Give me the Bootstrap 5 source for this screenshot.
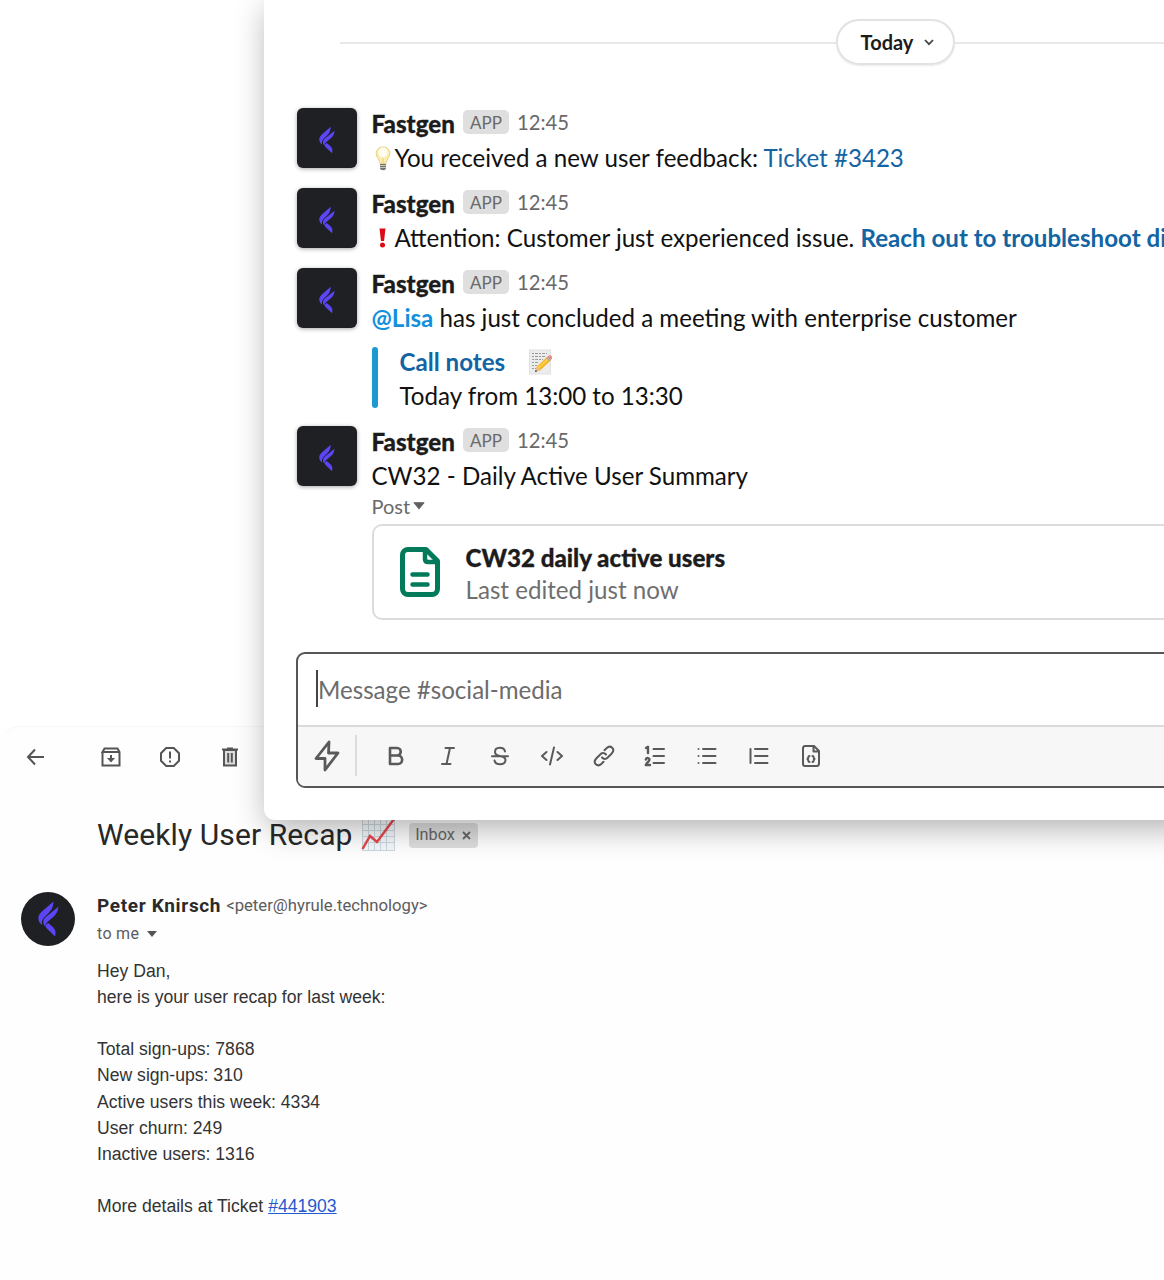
<!DOCTYPE html>
<html lang="en">
<head>
    <meta charset="UTF-8">
    <meta name="viewport" content="width=device-width, initial-scale=1.0">
    <title>Fastgen Notifications</title>
    <link href="https://cdn.jsdelivr.net/npm/bootstrap@5.3.2/dist/css/bootstrap.min.css" rel="stylesheet">
    <style>
        body { width: 1164px; height: 1280px; background: #fff; }
        svg { display: block; flex: none; }

        /* Chat window, lies over the mail window */
        .chat-window { left: 264px; top: 0; width: 1262px; height: 820px; padding: 0 32px; background: #fff; border-radius: 0 0 0 11px; box-shadow: 3px 8px 32px rgba(0, 0, 0, .31); font-family: Lato, sans-serif; color: #1d1c1d; font-size: 24.13px; line-height: 34px; }
        .day-row { padding-top: 19px; margin: 0 44px; }
        .day-line { height: 2px; margin-top: 1px; background: #e8e8e8; }
        .day-pill { width: 119px; height: 46px; border: 2px solid #e2e2e2; border-radius: 23px; font-size: 20px; font-weight: 700; box-shadow: 0 1px 2px rgba(0, 0, 0, .08); gap: 11px; padding-left: 5px; }
        .messages { padding-top: 42px; }
        .message { gap: 14.5px; padding-left: 1px; margin-bottom: 12px; white-space: nowrap; }
        .app-avatar { width: 60px; height: 60px; margin-top: 1px; padding-top: 4px; border-radius: 6px; background: #1f2024; box-shadow: 0 1px 4px rgba(0, 0, 0, .35); }
        .message-body { color: #111; }
        .app-name { font-weight: 900; color: #1d1c1d; -webkit-text-stroke: .3px #1d1c1d; }
        .app-tag { width: 46px; height: 24px; line-height: 25px; margin: 3px 8px 0 8px; border-radius: 5px; background: #dfdfdf; color: #696969; font-size: 17px; text-align: center; }
        .app-time { font-size: 20.3px; line-height: 31px; color: #696969; }
        .chat-link { color: #1264a3; text-decoration: none; }
        .mention { color: #1390dd; font-weight: 700; }
        .quote-bar { width: 6px; height: 61px; margin-top: 2px; border-radius: 3px; background: #1d9bd1; }
        .quote-block { gap: 22px; margin-top: 10px; }
        .post-label { font-size: 20px; line-height: 26px; padding-bottom: 2px; color: #696969; gap: 3px; }
        .post-card { width: 1100px; height: 96px; margin-top: 3px; border: 2px solid #dcdcdc; border-radius: 10px; padding-left: 26px; gap: 26px; line-height: 32px; }
        .post-text { padding-top: 3px; }
        .post-meta { color: #6f6f6f; }
        .composer { height: 136px; margin-top: 32px; border: 2px solid #565656; border-radius: 9px; overflow: hidden; }
        .composer-input { height: 71px; padding-left: 18px; font-size: 24.1px; color: #6c6c6c; }
        .caret { width: 2px; height: 37px; background: #444; margin-top: -2px; }
        .composer-tools { height: 61px; padding-bottom: 2px; background: #f7f7f7; border-top: 2px solid #dadada; padding-left: 16px; color: #5a5a5a; }
        .tool-divider { width: 2px; height: 41px; background: #dcdcdc; margin: 0 13px 0 15px; }
        .tool { width: 51.9px; }

        /* Mail window */
        .mail-window { padding-top: 726px; height: 1280px; overflow: hidden; font-family: Roboto, sans-serif; color: #2a2a2a; }
        .mail-pane { height: 554px; border-radius: 20px 0 0 0; border-top: 1px solid #f7f7f7; background: #fefefe; }
        .mail-tools { height: 60px; padding-left: 23px; gap: 35.500px; color: #555; }
        .mail-tools svg:first-child { margin-right: 16px; }
        .mail-subject { height: 48px; margin: 24px 0 0 97px; white-space: nowrap; }
        .subject-text { font-size: 30px; line-height: 48px; letter-spacing: .1px; color: #282828; }
        .inbox-tag { width: 69px; height: 25px; border-radius: 4px; background: #ddd; color: #666; font-size: 16.300px; gap: 7px; margin: 1px 0 0 13px; }
        .mail-head { margin-top: 33px; padding-left: 21px; gap: 22px; }
        .mail-avatar { width: 54px; height: 54px; background: #1f2024; }
        .sender { font-size: 19px; font-weight: 700; letter-spacing: .65px; line-height: 28px; }
        .sender-mail { font-size: 16.700px; color: #5c5c5c; margin-left: 5px; }
        .to-me { font-size: 16px; line-height: 27px; color: #5c5c5c; gap: 8px; letter-spacing: .3px; }
        .mail-text { margin: 10.500px 0 0 97px; font-family: "Liberation Sans", Arial, sans-serif; font-size: 17.600px; line-height: 26.200px; color: #333; }
        .mail-link { color: #2259cf; }
    </style>
</head>
<body class="position-relative overflow-hidden">

<!-- Shared logo -->
<svg width="0" height="0" class="position-absolute">
    <symbol id="logo" viewBox="58 40 64 108">
        <g fill="#5b45f5">
            <path d="M105 41L76 66C64 76 58 84 59 93C60 102 64 108 70 112C69 103 70 96 78 88L92 74C102 64 104 55 105 41Z"/>
            <path d="M120 57L94 78C80 88 74 94 74 103C74 109 76 113 80 117C80 112 82 106 90 100L106 86C116 77 119 70 120 57Z"/>
            <path d="M89 106L104 119C112 127 113 135 110 147L84 122C80 117 80 113 84 110Z"/>
        </g>
    </symbol>
</svg>

<div class="mail-window">
    <div class="mail-pane">
        <div class="mail-tools d-flex align-items-center">
            <svg width="24" height="24" viewBox="0 0 24 24" fill="none" stroke="currentColor" stroke-width="2"><path d="M21 12H6M12 4.500L5 12L12 19.500"/></svg>
            <svg width="24" height="24" viewBox="0 0 24 24" fill="none" stroke="currentColor" stroke-width="2"><path d="M3.500 7V20.500H20.500V7L18.500 3.500H5.500L3.500 7H20.500M12 10V16"/><path d="M8 13H16L12 17.500Z" fill="currentColor" stroke="none"/></svg>
            <svg width="24" height="24" viewBox="0 0 24 24" fill="none" stroke="currentColor" stroke-width="2"><path d="M8.200 3H15.800L21 8.200V15.800L15.800 21H8.200L3 15.800V8.200ZM12 6.500V13.500M12 15.500V17.500"/></svg>
            <svg width="24" height="24" viewBox="0 0 24 24" fill="none" stroke="currentColor" stroke-width="2"><path d="M6 5H18V20.500H6Z" fill="#ddd"/><path d="M4 4.500H20M9 3.500H15M10.200 8V17.500M13.800 8V17.500"/></svg>
        </div>
        <div class="mail-subject d-flex align-items-center">
            <span class="subject-text">Weekly User Recap</span>
            <svg class="ms-2" width="35" height="34" viewBox="0 0 35 34">
                <rect x="1" y="0" width="33" height="33" fill="#f5f8fa"/>
                <path d="M1 .5H34M1 6.500H34M1 12.500H34M1 18.500H34M1 24.500H34M1 32.500H34M1.500 0V33M7.500 0V33M13.500 0V33M19.500 0V33M25.500 0V33M33.500 0V33" stroke="#cbd8df" fill="none"/>
                <path d="M1.500 31L9 18L16 24L33 1" fill="none" stroke="#e5484d" stroke-width="2.500"/>
            </svg>
            <div class="inbox-tag d-flex align-items-center justify-content-center">Inbox
                <svg width="9" height="9" viewBox="0 0 9 9" stroke="currentColor" stroke-width="1.800"><path d="M1 1L8 8M8 1L1 8"/></svg>
            </div>
        </div>
        <div class="mail-head d-flex">
            <div class="mail-avatar rounded-circle d-flex align-items-center justify-content-center">
                <svg width="21" height="36"><use href="#logo"/></svg>
            </div>
            <div>
                <div class="d-flex align-items-center">
                    <span class="sender">Peter Knirsch</span>
                    <span class="sender-mail">&lt;peter@hyrule.technology&gt;</span>
                </div>
                <div class="to-me d-flex align-items-center">to me
                    <svg width="10" height="6" viewBox="0 0 10 6"><path d="M0 0H10L5 6Z" fill="#555"/></svg>
                </div>
            </div>
        </div>
        <div class="mail-text">
            Hey Dan,<br>
            here is your user recap for last week:<br>
            <br>
            Total sign-ups: 7868<br>
            New sign-ups: 310<br>
            Active users this week: 4334<br>
            User churn: 249<br>
            Inactive users: 1316<br>
            <br>
            More details at Ticket <a class="mail-link" href="#">#441903</a>
        </div>
    </div>
</div>

<div class="chat-window position-absolute">
    <div class="day-row d-flex align-items-center">
        <div class="day-line flex-grow-1"></div>
        <div class="day-pill d-flex align-items-center justify-content-center">Today
            <svg width="10" height="7" viewBox="0 0 10 7" fill="none" stroke="#444" stroke-width="1.800"><path d="M1 1L5 5.200L9 1"/></svg>
        </div>
        <div class="day-line flex-grow-1"></div>
    </div>

    <div class="messages">
        <div class="message d-flex align-items-start">
            <div class="app-avatar d-flex align-items-center justify-content-center"><svg width="16" height="28"><use href="#logo"/></svg></div>
            <div class="message-body">
                <div class="d-flex"><span class="app-name">Fastgen</span><span class="app-tag">APP</span><span class="app-time">12:45</span></div>
                <div class="d-flex align-items-center">
                    <svg width="23" height="25" viewBox="0 0 23 25">
                        <path d="M8 17H14V22C14 25 8 25 8 22Z" fill="#77746c"/>
                        <path d="M8 19.500H14M8 21.500H14" stroke="#c9c6bd"/>
                        <path d="M11 1C6.500 1 4.200 4.200 4.200 7.500C4.200 11.500 7.500 13 8 17.500H14C14.500 13 17.800 11.500 17.800 7.500C17.800 4.200 15.500 1 11 1Z" fill="#fbeeb0" stroke="#e5d18c"/>
                        <ellipse cx="11" cy="6.500" rx="4.500" ry="5" fill="#fffdf0"/>
                        <path d="M11 12V17" fill="none" stroke="#e8cd78"/>
                    </svg>
                    <span>You received a new user feedback: <a class="chat-link" href="#">Ticket #3423</a></span>
                </div>
            </div>
        </div>

        <div class="message d-flex align-items-start">
            <div class="app-avatar d-flex align-items-center justify-content-center"><svg width="16" height="28"><use href="#logo"/></svg></div>
            <div class="message-body">
                <div class="d-flex"><span class="app-name">Fastgen</span><span class="app-tag">APP</span><span class="app-time">12:45</span></div>
                <div class="d-flex align-items-center">
                    <svg width="23" height="20" viewBox="0 0 23 20"><path d="M7.500 .5H13.500L12 13H9Z" fill="#dc0a14"/><circle cx="10.500" cy="17" r="2.500" fill="#dc0a14"/></svg>
                    <span>Attention: Customer just experienced issue. <a class="chat-link fw-bold" href="#">Reach out to troubleshoot directly</a></span>
                </div>
            </div>
        </div>

        <div class="message d-flex align-items-start">
            <div class="app-avatar d-flex align-items-center justify-content-center"><svg width="16" height="28"><use href="#logo"/></svg></div>
            <div class="message-body">
                <div class="d-flex"><span class="app-name">Fastgen</span><span class="app-tag">APP</span><span class="app-time">12:45</span></div>
                <div><span class="mention">@Lisa</span> has just concluded a meeting with enterprise customer</div>
                <div class="quote-block d-flex">
                    <div class="quote-bar"></div>
                    <div>
                        <div class="d-flex align-items-center"><a class="chat-link fw-bold" href="#">Call notes</a>
                            <svg class="ms-4" width="24" height="26" viewBox="0 0 24 26">
                                <rect x=".5" y="1" width="21" height="24" fill="#ececec" stroke="#e0e0e0"/>
                                <path d="M3 4.500H18M3 7.500H16M3 10.500H14M3 13.500H10M3 16.500H8M3 19.500H7" stroke="#9b9b9b" stroke-dasharray="2 1 3 1"/>
                                <path d="M6 23L8 17.500L18 8L21.500 11.500L11.500 21Z" fill="#f6b420"/>
                                <path d="M9.500 19L19.500 9.500" stroke="#ffd65c" stroke-width="1.500"/>
                                <path d="M18 8L20 6.500C22 5.500 24 8 23 9.500L21.500 11.500Z" fill="#e58c88"/>
                                <path d="M17 9L18.300 7.800L21.800 11.200L20.500 12.500Z" fill="#a9afb3"/>
                                <path d="M6 23L8 17.500L11.500 21Z" fill="#e7c08b"/>
                                <path d="M6 23L6.800 20.800L8.200 22.200Z" fill="#333"/>
                            </svg>
                        </div>
                        <div>Today from 13:00 to 13:30</div>
                    </div>
                </div>
            </div>
        </div>

        <div class="message d-flex align-items-start mb-0">
            <div class="app-avatar d-flex align-items-center justify-content-center"><svg width="16" height="28"><use href="#logo"/></svg></div>
            <div class="message-body">
                <div class="d-flex"><span class="app-name">Fastgen</span><span class="app-tag">APP</span><span class="app-time">12:45</span></div>
                <div>CW32 - Daily Active User Summary</div>
                <div class="post-label d-flex align-items-center">Post
                    <svg width="12" height="8" viewBox="0 0 11 7"><path d="M1 .5H10L5.500 6Z" fill="#616061" stroke="#616061" stroke-linejoin="round"/></svg>
                </div>
                <div class="post-card d-flex align-items-center">
                    <svg width="40" height="50" viewBox="0 0 40 50" fill="none" stroke="#007a5a" stroke-width="5" stroke-linejoin="round" stroke-linecap="round">
                        <path d="M8 2.500H26L37.500 14V42C37.500 45 35 47.500 32 47.500H8C5 47.500 2.500 45 2.500 42V8C2.500 5 5 2.500 8 2.500Z"/>
                        <path d="M25 4V12C25 14 26 15 28 15H36M12.500 27.500H27.500M12.500 37.500H27.500" stroke-width="4.500"/>
                    </svg>
                    <div class="post-text">
                        <div class="app-name">CW32 daily active users</div>
                        <div class="post-meta">Last edited just now</div>
                    </div>
                </div>
            </div>
        </div>
    </div>

    <!-- Message composer -->
    <div class="composer">
        <div class="composer-input d-flex align-items-center"><span class="caret"></span><span>Message #social-media</span></div>
        <div class="composer-tools d-flex align-items-center">
            <svg width="26" height="32" viewBox="0 0 26 32" fill="none" stroke="currentColor" stroke-width="2.800" stroke-linejoin="round"><path d="M15 2L2 18.500H11V30L24 13H14.500Z"/></svg>
            <div class="tool-divider"></div>
            <div class="tool d-flex justify-content-center"><svg width="24" height="24" viewBox="0 0 24 24" fill="none" stroke="currentColor" stroke-width="2.600" stroke-linejoin="round"><path d="M6 4H13C18 4 18 11.500 13 11.500H6ZM6 11.500H14C19.500 11.500 19.500 20 14 20H6Z"/></svg></div>
            <div class="tool d-flex justify-content-center"><svg width="24" height="24" viewBox="0 0 24 24" fill="none" stroke="currentColor" stroke-width="2" stroke-linecap="round"><path d="M9.500 4H18M6 20H14.500M14 4L10.500 20"/></svg></div>
            <div class="tool d-flex justify-content-center"><svg width="24" height="24" viewBox="0 0 24 24" fill="none" stroke="currentColor" stroke-width="2" stroke-linecap="round"><path d="M17 7.500C16 2.500 7 2.500 7 8C7 10.500 9 11.500 12 12C15 12.500 17.500 13.500 17.500 16C17.500 21.500 7.500 21.500 6.500 16.500M4 12.200H20"/></svg></div>
            <div class="tool d-flex justify-content-center"><svg width="24" height="24" viewBox="0 0 24 24" fill="none" stroke="currentColor" stroke-width="2" stroke-linecap="round" stroke-linejoin="round"><path d="M6.500 8L2 12L6.500 16M17.500 8L22 12L17.500 16M14 3.500L10 20.500"/></svg></div>
            <div class="tool d-flex justify-content-center"><svg width="24" height="24" viewBox="0 0 24 24" fill="none" stroke="currentColor" stroke-width="2" stroke-linecap="round"><path d="M10 13.500C11.800 15.500 14 15.300 15.500 13.800L19.500 9.800C24 5 18.500 .5 14.500 4.200L12.500 6.200M14 10.500C12.200 8.500 10 8.700 8.500 10.200L4.500 14.200C0 19 5.500 23.500 9.500 19.800L11.500 17.800"/></svg></div>
            <div class="tool d-flex justify-content-center"><svg width="24" height="24" viewBox="0 0 24 24" fill="none" stroke="currentColor" stroke-width="2" stroke-linecap="round" stroke-linejoin="round"><path d="M10.500 5H21M10.500 12H21M10.500 19H21"/><path d="M3 4L5 2.800V9M2.800 15.500C3.500 13.300 7 13.800 6.300 16.200C6 17.500 3.500 19 2.800 21H7" stroke-width="2.400"/></svg></div>
            <div class="tool d-flex justify-content-center"><svg width="24" height="24" viewBox="0 0 24 24" fill="none" stroke="currentColor" stroke-width="2" stroke-linecap="round"><path d="M8 5H20.500M8 12H20.500M8 19H20.500M3.500 5V5.010M3.500 12V12.010M3.500 19V19.010"/></svg></div>
            <div class="tool d-flex justify-content-center"><svg width="24" height="24" viewBox="0 0 24 24" fill="none" stroke="currentColor" stroke-width="2" stroke-linecap="round"><path d="M3.500 5V19M8 5H20.500M8 12H20.500M8 19H20.500"/></svg></div>
            <div class="tool d-flex justify-content-center"><svg width="24" height="24" viewBox="0 0 24 24" fill="none" stroke="currentColor" stroke-width="2" stroke-linecap="round" stroke-linejoin="round"><path d="M6 2H15L20 7V19.500C20 21 19 22 17.500 22H6C4.500 22 4 21 4 19.500V4.500C4 3 4.500 2 6 2ZM14.500 2.500V7.500H19.500M10.500 12C8.500 12 10 14.300 8.500 15C10 15.700 8.500 18 10.500 18M13.500 12C15.500 12 14 14.300 15.500 15C14 15.700 15.500 18 13.500 18"/></svg></div>
        </div>
    </div>
</div>

<script src="https://cdn.jsdelivr.net/npm/bootstrap@5.3.2/dist/js/bootstrap.bundle.min.js"></script>
</body>
</html>
